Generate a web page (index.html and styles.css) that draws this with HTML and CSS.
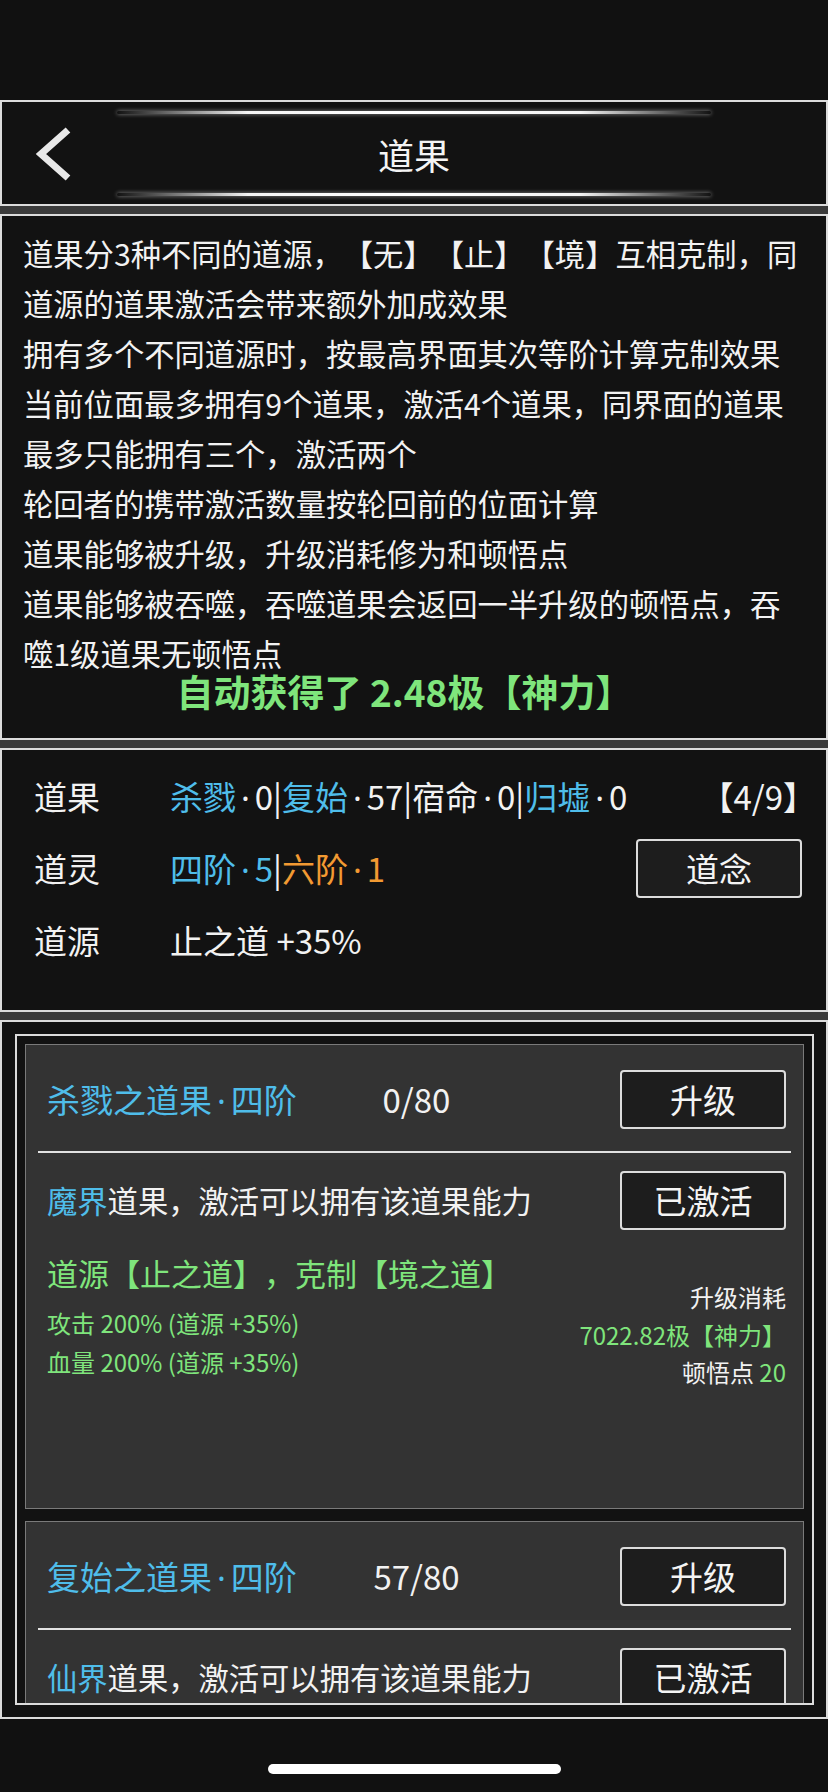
FILE: index.html
```html
<!DOCTYPE html>
<html lang="zh-CN">
<head>
    <meta charset="UTF-8">
    <meta name="viewport" content="width=device-width, initial-scale=1.0">
    <title>道果</title>
    <link rel="stylesheet" href="styles.css">
</head>
<body>
    <div class="status-bar"></div>

    <main class="frame">
        <header class="panel title-panel">
            <div class="glow"></div>
            <div class="title-row">
                <svg class="back" width="44" height="60" viewBox="0 0 44 60">
                    <polyline points="38,6 11,30 38,54" fill="none" stroke="#e8e8e8" stroke-width="7"/>
                </svg>
                <h1>道果</h1>
                <span></span>
            </div>
            <div class="glow"></div>
        </header>

        <section class="panel info-panel">
            <p>道果分3种不同的道源，【无】【止】【境】互相克制，同道源的道果激活会带来额外加成效果</p>
            <p>拥有多个不同道源时，按最高界面其次等阶计算克制效果</p>
            <p>当前位面最多拥有9个道果，激活4个道果，同界面的道果最多只能拥有三个，激活两个</p>
            <p>轮回者的携带激活数量按轮回前的位面计算</p>
            <p>道果能够被升级，升级消耗修为和顿悟点</p>
            <p>道果能够被吞噬，吞噬道果会返回一半升级的顿悟点，吞噬1级道果无顿悟点</p>
            <p class="auto-gain">自动获得了 2.48极【神力】</p>
        </section>

        <section class="panel stats-panel">
            <div class="stat-row">
                <span class="stat-label">道果</span>
                <span class="stat-value"><span class="blue">杀戮</span><span class="dot">·</span>0|<span class="blue">复始</span><span class="dot">·</span>57|宿命<span class="dot">·</span>0|<span class="blue">归墟</span><span class="dot">·</span>0</span>
                <span class="slot-count">【4/9】</span>
            </div>
            <div class="stat-row">
                <span class="stat-label">道灵</span>
                <span class="stat-value"><span class="blue">四阶<span class="dot">·</span>5</span>|<span class="orange">六阶<span class="dot">·</span>1</span></span>
                <button class="btn">道念</button>
            </div>
            <div class="stat-row">
                <span class="stat-label">道源</span>
                <span class="stat-value">止之道 +35%</span>
            </div>
        </section>

        <section class="panel list-panel">
            <div class="list-box">
                <div class="card">
                    <div class="card-head">
                        <span class="card-title">杀戮之道果<span class="dot">·</span>四阶</span>
                        <span class="card-level">0/80</span>
                        <button class="btn">升级</button>
                    </div>
                    <div class="divider"></div>
                    <div class="card-realm">
                        <span><span class="blue">魔界</span>道果，激活可以拥有该道果能力</span>
                        <button class="btn">已激活</button>
                    </div>
                    <div class="card-body">
                        <div class="effects">
                            <div class="source">道源【止之道】，克制【境之道】</div>
                            <div class="effect-list">
                                <div>攻击 200% (道源 +35%)</div>
                                <div>血量 200% (道源 +35%)</div>
                            </div>
                        </div>
                        <div class="cost">
                            <div>升级消耗</div>
                            <div class="green">7022.82极【神力】</div>
                            <div>顿悟点 <span class="green">20</span></div>
                        </div>
                    </div>
                </div>

                <div class="card">
                    <div class="card-head">
                        <span class="card-title">复始之道果<span class="dot">·</span>四阶</span>
                        <span class="card-level">57/80</span>
                        <button class="btn">升级</button>
                    </div>
                    <div class="divider"></div>
                    <div class="card-realm">
                        <span><span class="blue">仙界</span>道果，激活可以拥有该道果能力</span>
                        <button class="btn">已激活</button>
                    </div>
                </div>
            </div>
        </section>
    </main>

    <div class="home-bar">
        <span class="home-indicator"></span>
    </div>
</body>
</html>
```

FILE: styles.css
```css
body {
    margin: 0;
    width: 828px;
    height: 1792px;
    overflow: hidden;
    background: #111;
    color: #f2f2f2;
    font-family: "Noto Sans CJK SC", "Noto Sans", sans-serif;
    text-spacing-trim: space-all;
}

p {
    margin: 0;
}

.status-bar {
    height: 100px;
}

.frame {
    display: flex;
    flex-direction: column;
    gap: 8px;
    background: #3b3b3b;
}

.panel {
    box-sizing: border-box;
    border: 2px solid #dcdcdc;
    background: #121212;
}

/* title */

.title-panel {
    height: 106px;
    display: flex;
    flex-direction: column;
    align-items: center;
    padding-top: 9px;
}

.glow {
    width: 594px;
    height: 3px;
    border-radius: 2px;
    background: linear-gradient(90deg, rgba(255,255,255,0), #f4f4f4 22%, #fff 50%, #f4f4f4 78%, rgba(255,255,255,0));
    box-shadow: 0 0 4px rgba(255, 255, 255, 0.55);
}

.title-row {
    width: 100%;
    height: 79px;
    display: grid;
    grid-template-columns: 1fr auto 1fr;
    align-items: center;
}

.back {
    margin-left: 28px;
}

.title-row h1 {
    margin: 0;
    font-size: 36px;
    font-weight: 400;
    color: #f4f4f4;
}

/* rules */

.info-panel {
    height: 526px;
    padding: 12px 20px 0 21px;
    font-size: 30.3px;
    line-height: 50px;
}

.auto-gain {
    margin-top: 1px;
    line-height: 24px;
    text-align: center;
    font-size: 37px;
    font-weight: 700;
    color: #7fe57c;
    padding-right: 20px;
}

/* stats */

.stats-panel {
    height: 264px;
    padding: 10px 24px 0 32px;
    font-size: 33px;
}

.stat-row {
    height: 72px;
    display: flex;
    align-items: center;
}

.stat-label {
    width: 136px;
}

.stat-value {
    flex: 1;
    white-space: nowrap;
}

.slot-count {
    margin-right: -14px;
}

.dot {
    font-family: "Noto Sans", sans-serif;
    margin: 0 0.15em;
}

.blue {
    color: #4fbdea;
}

.orange {
    color: #f29a32;
}

.green {
    color: #7fe57c;
}

.btn {
    box-sizing: border-box;
    width: 166px;
    height: 59px;
    border: 2px solid #dcdcdc;
    border-radius: 4px;
    background: #1d1d1d;
    color: #f4f4f4;
    font-family: inherit;
    font-size: 33px;
    padding: 0;
}

/* list */

.list-panel {
    height: 699px;
    padding: 12px 12px 0 13px;
}

.list-box {
    box-sizing: border-box;
    height: 671px;
    border: 2px solid #dcdcdc;
    padding: 8px 8px 0 8px;
    display: flex;
    flex-direction: column;
    gap: 12px;
    overflow: hidden;
}

.card {
    box-sizing: border-box;
    flex: none;
    height: 465px;
    border: 1px solid #7a7a7a;
    background: #333;
    padding: 0 12px;
}

.card-head {
    height: 106px;
    box-sizing: border-box;
    padding: 2px 5px 0 9px;
    display: grid;
    grid-template-columns: 1fr auto 1fr;
    align-items: center;
}

.card-title {
    font-size: 33px;
    color: #4fbdea;
    white-space: nowrap;
}

.card-level {
    font-size: 33px;
}

.card-head .btn {
    justify-self: end;
}

.divider {
    height: 2px;
    background: #e2e2e2;
}

.card-realm {
    height: 94px;
    padding: 0 5px 0 9px;
    display: flex;
    align-items: center;
    justify-content: space-between;
    font-size: 30.3px;
}

.card-body {
    display: flex;
    justify-content: space-between;
    padding: 6px 5px 0 9px;
    color: #7fe57c;
}

.source {
    font-size: 31px;
    line-height: 40px;
}

.effect-list {
    margin-top: 10px;
    font-size: 24px;
    line-height: 39px;
}

.cost {
    padding-top: 25px;
    text-align: right;
    font-size: 24px;
    line-height: 37.5px;
    color: #f2f2f2;
}

/* home indicator */

.home-bar {
    display: flex;
    justify-content: center;
    padding-top: 45px;
}

.home-indicator {
    width: 293px;
    height: 10px;
    border-radius: 5px;
    background: #fff;
}
```
